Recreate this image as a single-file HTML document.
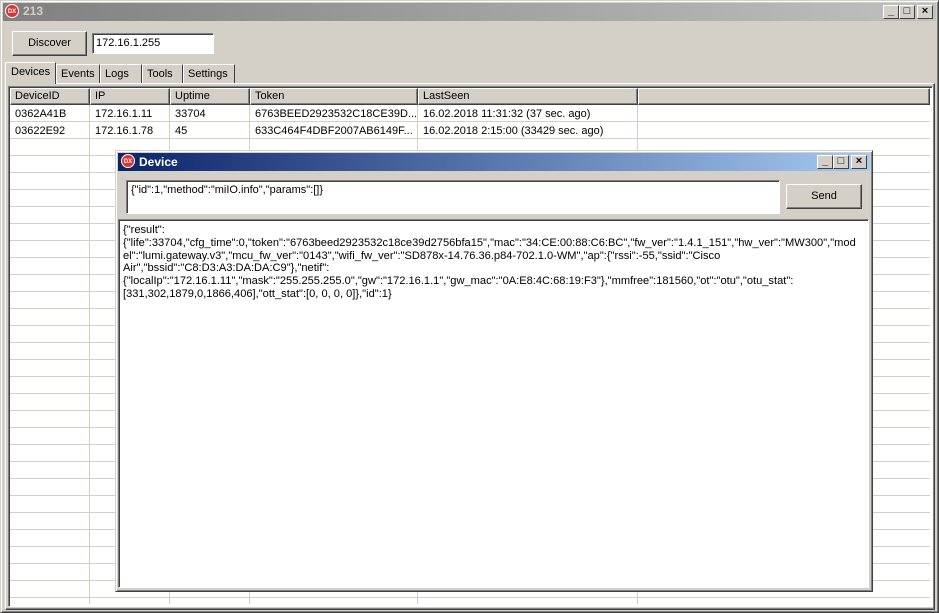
<!DOCTYPE html><html><head><style>
*{margin:0;padding:0;box-sizing:border-box}
body{width:939px;height:613px;background:#d4d0c8;font-family:"Liberation Sans",sans-serif;font-size:11px;position:relative;overflow:hidden;color:#000}
.a{position:absolute}
.raised{border:1px solid;border-color:#fff #404040 #404040 #fff;box-shadow:inset -1px -1px 0 #808080}
.sunk{border:1px solid;border-color:#808080 #fff #fff #808080;box-shadow:inset 1px 1px 0 #404040}
.tb{width:16px;height:14px;background:#d4d0c8;border:1px solid;border-color:#fff #404040 #404040 #fff;font-size:11px;line-height:11px;text-align:center;font-weight:bold}
.logo{width:14px;height:14px;border-radius:50%;background:#d33;color:#fff;font-size:6px;font-weight:bold;line-height:14px;text-align:center;border:1px solid #fff}
.tab{top:64px;height:19px;border:1px solid;border-bottom:none;border-color:#fff #404040 #404040 #fff;padding:3px 4px;background:#d4d0c8}
.cell{position:absolute;white-space:nowrap}
.memo div{white-space:nowrap;height:12.8px}
</style></head><body>
<div class="a" style="left:0;top:0;width:939px;height:613px;border:1px solid;border-color:#d4d0c8 #404040 #404040 #d4d0c8;box-shadow:inset 1px 1px 0 #fff,inset -1px -1px 0 #808080"></div>
<div class="a" style="left:3px;top:3px;width:933px;height:18px;background:linear-gradient(90deg,#808080,#c0c0c0)"></div>
<div class="a logo" style="left:5px;top:4px">DX</div>
<div class="a" style="left:23px;top:4px;color:#d4d0c8;font-weight:bold;font-size:12px">213</div>
<div class="a tb" style="left:883px;top:5px">_</div><div class="a tb" style="left:899px;top:5px">□</div><div class="a tb" style="left:917px;top:5px">×</div>

<div class="a raised" style="left:12px;top:31px;width:75px;height:25px;text-align:center;line-height:23px">Discover</div>
<div class="a sunk" style="left:92px;top:33px;width:122px;height:21px;background:#fff;padding:3px 3px">172.16.1.255</div>

<div class="a tab" style="left:5px;top:62px;height:22px;width:51px;padding:3px 5px;z-index:2;background:#d4d0c8">Devices</div>
<div class="a tab" style="left:56px;width:44px">Events</div>
<div class="a tab" style="left:100px;width:42px">Logs</div>
<div class="a tab" style="left:142px;width:41px">Tools</div>
<div class="a tab" style="left:183px;width:52px">Settings</div>
<div class="a" style="left:5px;top:83px;width:930px;height:527px;border:1px solid;border-color:#fff #404040 #404040 #fff;box-shadow:inset -1px -1px 0 #808080"></div>

<div class="a sunk" style="left:8px;top:86px;width:925px;height:521px;background:#fff"></div>
<div class="a" style="left:10px;top:105px;width:920px;height:499px;background:
linear-gradient(90deg,transparent 79px,#d4d0c8 79px,#d4d0c8 80px,transparent 80px,transparent 159px,#d4d0c8 159px,#d4d0c8 160px,transparent 160px,transparent 239px,#d4d0c8 239px,#d4d0c8 240px,transparent 240px,transparent 407px,#d4d0c8 407px,#d4d0c8 408px,transparent 408px,transparent 627px,#d4d0c8 627px,#d4d0c8 628px,transparent 628px),
repeating-linear-gradient(180deg,transparent 0,transparent 16px,#d4d0c8 16px,#d4d0c8 17px)"></div>
<div class="a" style="left:10px;top:88px;width:920px;height:17px;background:#d4d0c8"></div>
<div class="a raised" style="left:10px;top:88px;width:80px;height:17px;padding:1px 4px">DeviceID</div>
<div class="a raised" style="left:90px;top:88px;width:80px;height:17px;padding:1px 4px">IP</div>
<div class="a raised" style="left:170px;top:88px;width:80px;height:17px;padding:1px 4px">Uptime</div>
<div class="a raised" style="left:250px;top:88px;width:168px;height:17px;padding:1px 4px">Token</div>
<div class="a raised" style="left:418px;top:88px;width:220px;height:17px;padding:1px 4px">LastSeen</div>
<div class="a raised" style="left:638px;top:88px;width:292px;height:17px"></div>
<div class="cell" style="left:15px;top:108px">0362A41B</div><div class="cell" style="left:95px;top:108px">172.16.1.11</div><div class="cell" style="left:175px;top:108px">33704</div><div class="cell" style="left:255px;top:108px">6763BEED2923532C18CE39D...</div><div class="cell" style="left:423px;top:108px">16.02.2018 11:31:32 (37 sec. ago)</div>
<div class="cell" style="left:15px;top:125px">03622E92</div><div class="cell" style="left:95px;top:125px">172.16.1.78</div><div class="cell" style="left:175px;top:125px">45</div><div class="cell" style="left:255px;top:125px">633C464F4DBF2007AB6149F...</div><div class="cell" style="left:423px;top:125px">16.02.2018 2:15:00 (33429 sec. ago)</div>

<div class="a" style="left:115px;top:150px;width:758px;height:442px;background:#d4d0c8;border:1px solid;border-color:#d4d0c8 #404040 #404040 #d4d0c8;box-shadow:inset 1px 1px 0 #fff,inset -1px -1px 0 #808080"></div>
<div class="a" style="left:118px;top:153px;width:752px;height:18px;background:linear-gradient(90deg,#0a246a,#a6caf0)"></div>
<div class="a logo" style="left:121px;top:154px">DX</div>
<div class="a" style="left:139px;top:155px;color:#fff;font-weight:bold;font-size:12px">Device</div>
<div class="a tb" style="left:817px;top:155px">_</div><div class="a tb" style="left:833px;top:155px">□</div><div class="a tb" style="left:851px;top:155px">×</div>
<div class="a sunk" style="left:126px;top:180px;width:654px;height:34px;background:#fff;padding:3px 4px">{"id":1,"method":"miIO.info","params":[]}</div>
<div class="a raised" style="left:786px;top:184px;width:76px;height:25px;text-align:center;line-height:23px">Send</div>
<div class="a sunk memo" style="left:118px;top:219px;width:751px;height:369px;background:#fff;padding:4px 4px;font-size:11.1px;overflow:hidden">
<div>{"result":</div>
<div>{"life":33704,"cfg_time":0,"token":"6763beed2923532c18ce39d2756bfa15","mac":"34:CE:00:88:C6:BC","fw_ver":"1.4.1_151","hw_ver":"MW300","mod</div>
<div>el":"lumi.gateway.v3","mcu_fw_ver":"0143","wifi_fw_ver":"SD878x-14.76.36.p84-702.1.0-WM","ap":{"rssi":-55,"ssid":"Cisco</div>
<div>Air","bssid":"C8:D3:A3:DA:DA:C9"},"netif":</div>
<div>{"localIp":"172.16.1.11","mask":"255.255.255.0","gw":"172.16.1.1","gw_mac":"0A:E8:4C:68:19:F3"},"mmfree":181560,"ot":"otu","otu_stat":</div>
<div>[331,302,1879,0,1866,406],"ott_stat":[0, 0, 0, 0]},"id":1}</div>
</div>
</body></html>
